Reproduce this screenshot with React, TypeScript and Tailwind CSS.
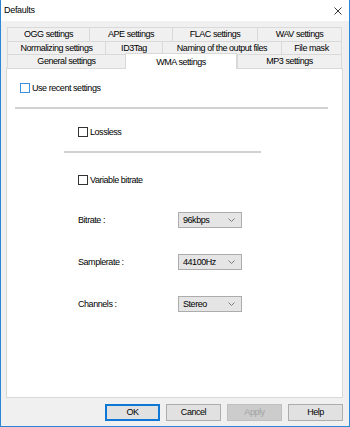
import React from "react";

const Tab = ({ w, label, last }: { w: number; label: string; last?: boolean }) => (
  <div
    className={`h-full flex items-center justify-center bg-[#f0f0f0] border-l border-t border-[#d9d9d9] ${last ? "border-r" : ""}`}
    style={{ width: w }}
  >
    <span className="leading-none">{label}</span>
  </div>
);

const Check = ({ blue }: { blue?: boolean }) => (
  <div className={`w-[10px] h-[10px] bg-white border ${blue ? "border-[#3b8fdc]" : "border-[#333333]"}`} />
);

const Chevron = () => (
  <svg width="7" height="4" viewBox="0 0 7 4" className="block">
    <path d="M0.5 0.5 L3.5 3.5 L6.5 0.5" fill="none" stroke="#707070" strokeWidth="0.9" />
  </svg>
);

const Select = ({ value }: { value: string }) => (
  <div className="w-[64px] h-[16px] bg-[#e5e5e5] border border-[#acacac] flex items-center justify-between pl-[4px] pr-[6px]">
    <span className="leading-none">{value}</span>
    <Chevron />
  </div>
);

const Field = ({ label, value, mt }: { label: string; value: string; mt: string }) => (
  <div className={`${mt} ml-[71px] h-[16px] flex items-center`}>
    <span className="w-[100px] leading-none">{label}</span>
    <Select value={value} />
  </div>
);

const Btn = ({ label, variant }: { label: string; variant?: "default" | "disabled" }) => {
  const cls =
    variant === "default"
      ? "border-2 border-[#0f78d7] bg-[#e1e1e1] text-black"
      : variant === "disabled"
      ? "border border-[#bfbfbf] bg-[#cccccc] text-[#a3a3a3]"
      : "border border-[#adadad] bg-[#e1e1e1] text-black";
  return (
    <div className={`w-[55px] h-[17px] flex items-center justify-center ${cls}`}>
      <span className="leading-none">{label}</span>
    </div>
  );
};

export default function App() {
  return (
    <div className="w-[350px] h-[427px] bg-[#f0f0f0] border-x border-b border-[#2b86d6] flex flex-col font-['Liberation_Sans',Arial,sans-serif] text-[9px] tracking-[-0.45px] text-black overflow-hidden">
      {/* Title bar */}
      <div className="h-[21px] bg-white flex items-center justify-between pl-[3px] pr-[7px] shrink-0">
        <span className="leading-none tracking-[-0.3px]">Defaults</span>
        <svg width="8" height="8" viewBox="0 0 8 8" className="block">
          <path d="M0.5 0.5 L7.5 7.5 M7.5 0.5 L0.5 7.5" stroke="#222" strokeWidth="0.9" />
        </svg>
      </div>

      {/* Tabs */}
      <div className="mt-[6px] ml-[6px] w-[335px] flex flex-col">
        <div className="h-[14px] flex">
          <Tab w={82} label="OGG settings" />
          <Tab w={83} label="APE settings" />
          <Tab w={85} label="FLAC settings" />
          <Tab w={85} label="WAV settings" last />
        </div>
        <div className="h-[13px] flex">
          <Tab w={98} label="Normalizing settings" />
          <Tab w={57} label="ID3Tag" />
          <Tab w={119} label="Naming of the output files" />
          <Tab w={61} label="File mask" last />
        </div>
        <div className="h-[14px] flex">
          <Tab w={118} label="General settings" />
          <div className="relative z-10 w-[112px] h-[16px] -mt-[1px] self-start bg-white border-l border-t border-r border-[#d9d9d9] flex items-start justify-center pt-[4px]">
            <span className="leading-none">WMA settings</span>
          </div>
          <Tab w={105} label="MP3 settings" last />
        </div>
      </div>

      {/* Panel */}
      <div className="ml-[5px] w-[337px] h-[330px] bg-white border border-[#d9d9d9] flex flex-col shrink-0">
        <div className="mt-[14px] ml-[13px] h-[10px] flex items-center gap-[2px]">
          <Check blue />
          <span className="leading-none">Use recent settings</span>
        </div>
        <div className="mt-[14px] ml-[8px] w-[313px] h-[2px] bg-[#d2d2d2]" />
        <div className="mt-[18px] ml-[71px] h-[10px] flex items-center gap-[2px]">
          <Check />
          <span className="leading-none">Lossless</span>
        </div>
        <div className="mt-[14px] ml-[57px] w-[197px] h-[2px] bg-[#d2d2d2]" />
        <div className="mt-[22px] ml-[71px] h-[10px] flex items-center gap-[2px]">
          <Check />
          <span className="leading-none">Variable bitrate</span>
        </div>
        <Field mt="mt-[27px]" label="Bitrate :" value="96kbps" />
        <Field mt="mt-[26px]" label="Samplerate :" value="44100Hz" />
        <Field mt="mt-[26px]" label="Channels :" value="Stereo" />
      </div>

      {/* Buttons */}
      <div className="mt-[6px] ml-[104px] flex gap-[6px]">
        <Btn label="OK" variant="default" />
        <Btn label="Cancel" />
        <Btn label="Apply" variant="disabled" />
        <Btn label="Help" />
      </div>
    </div>
  );
}
